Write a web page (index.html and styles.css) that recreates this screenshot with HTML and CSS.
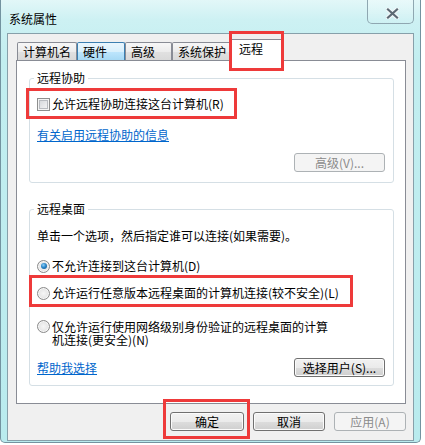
FILE: index.html
```html
<!DOCTYPE html>
<html lang="zh-CN">
<head>
<meta charset="utf-8">
<title>系统属性</title>
<link rel="stylesheet" href="styles.css">
</head>
<body>
<div class="window">
  <div class="titlebar">
    <span class="title">系统属性</span>
    <div class="close-btn">
      <svg width="13" height="11" viewBox="0 0 13 11">
        <path d="M2 1.5 L11 9.5 M11 1.5 L2 9.5" stroke="#f4f8fa" stroke-width="4.2" stroke-linecap="round" fill="none"/>
        <path d="M2 1.5 L11 9.5 M11 1.5 L2 9.5" stroke="#5d6a74" stroke-width="2.2" stroke-linecap="square" fill="none"/>
      </svg>
    </div>
  </div>
  <div class="client">
    <div class="tabs">
      <div class="tab t1">计算机名</div>
      <div class="tab t2 hover">硬件</div>
      <div class="tab t3">高级</div>
      <div class="tab t4">系统保护</div>
      <div class="tab t5 active">远程</div>
    </div>
    <div class="panel">
      <fieldset class="group g1">
        <legend>远程协助</legend>
        <div class="check-row"><span class="checkbox"></span><span class="lbl">允许远程协助连接这台计算机(R)</span></div>
        <div class="link-row l1"><a class="link">有关启用远程协助的信息</a></div>
        <div class="btn-row b1"><span class="btn disabled wide">高级(V)...</span></div>
      </fieldset>
      <fieldset class="group g2">
        <legend>远程桌面</legend>
        <p class="desc">单击一个选项，然后指定谁可以连接(如果需要)。</p>
        <div class="radio-row r1"><span class="radio checked"></span><span class="lbl">不允许连接到这台计算机(D)</span></div>
        <div class="radio-row r2"><span class="radio"></span><span class="lbl">允许运行任意版本远程桌面的计算机连接(较不安全)(L)</span></div>
        <div class="radio-row r3"><span class="radio"></span><span class="lbl multi">仅允许运行使用网络级别身份验证的远程桌面的计算机连接(更安全)(N)</span></div>
        <div class="help-row"><a class="link">帮助我选择</a><span class="btn wide">选择用户(S)...</span></div>
      </fieldset>
    </div>
    <div class="footer">
      <span class="btn ok">确定</span>
      <span class="btn">取消</span>
      <span class="btn disabled">应用(A)</span>
    </div>
  </div>
  <div class="mark m-tab"></div>
  <div class="mark m-check"></div>
  <div class="mark m-radio"></div>
  <div class="mark m-ok"></div>
</div>
</body>
</html>
```

FILE: styles.css
```css
html, body {
  margin: 0;
  padding: 0;
  background: #ffffff;
}
body {
  font-family: "Noto Sans CJK SC", "Noto Sans", sans-serif;
  font-size: 12px;
  color: #000;
}
.window {
  position: relative;
  width: 421px;
  height: 443px;
  box-sizing: border-box;
  padding: 0 6px 1px 6px;
  border: 1px solid #7393a0;
  border-top: none;
  border-radius: 0 0 5px 5px;
  background: linear-gradient(180deg, #e2f7f8 0px, #cdf1f3 20px, #c2eef0 60px, #b9ebee 100%);
  display: flex;
  flex-direction: column;
}
.titlebar {
  height: 33px;
  display: flex;
  align-items: flex-start;
  padding-left: 2px;
}
.title {
  padding-top: 12px;
  line-height: 14px;
  color: #000;
}
.close-btn {
  margin-left: auto;
  width: 47px;
  height: 24px;
  box-sizing: border-box;
  border: 1px solid #8fa7b1;
  border-top: none;
  border-radius: 0 0 5px 5px;
  background: linear-gradient(180deg, rgba(255,255,255,0.25), rgba(255,255,255,0.05));
  display: flex;
  justify-content: center;
  align-items: center;
  padding: 3px 0 0 3px;
}
.client {
  height: 408px;
  box-sizing: border-box;
  border: 1px solid #87a0aa;
  background: #f0f0f0;
  display: flex;
  flex-direction: column;
}
.tabs {
  height: 26px;
  display: flex;
  align-items: flex-end;
  padding-left: 9px;
  position: relative;
  z-index: 1;
}
.tab {
  box-sizing: border-box;
  height: 18px;
  padding: 2px 0 0 5px;
  line-height: 14px;
  border: 1px solid #898c95;
  border-bottom: none;
  border-radius: 2px 2px 0 0;
  background: linear-gradient(180deg, #f7f7f7 0%, #ececec 50%, #e1e1e1 51%, #d9d9d9 100%);
  white-space: nowrap;
}
.t1 { width: 60px; }
.t2 { width: 48px; }
.t3 { width: 47px; }
.t4 { width: 59px; }
.tab.hover {
  border-color: #3c7fb1;
  background: linear-gradient(180deg, #eaf6fd 0%, #d9f0fc 50%, #bee6fd 51%, #a7d9f5 100%);
}
.tab.active {
  width: 53px;
  height: 22px;
  margin-left: -1px;
  margin-bottom: -1px;
  padding: 2px 0 0 8px;
  background: #ffffff;
  border-color: #898c95;
}
.panel {
  height: 344px;
  box-sizing: border-box;
  margin: 0 7px 0 8px;
  border: 1px solid #898c95;
  background: #ffffff;
  padding: 10px 11px 0 12px;
}
.group {
  margin: 0;
  border: 1px solid #d5dfe5;
  border-radius: 3px;
  padding: 0 8px 0 7px;
  min-width: 0;
}
.group legend {
  margin-left: -3px;
  padding: 0 3px;
  line-height: 14px;
}
.g1 { padding-bottom: 10px; }
.g2 { margin-top: 19px; padding-bottom: 8px; }
.check-row, .radio-row {
  display: flex;
  align-items: center;
  line-height: 14px;
}
.check-row { margin-top: 12px; }
.checkbox {
  width: 13px;
  height: 13px;
  box-sizing: border-box;
  border: 1px solid #8e8f8f;
  background: linear-gradient(135deg, #cfd2d6 0%, #e9eaec 60%, #f7f7f7 100%);
  box-shadow: inset 0 0 0 1px #f4f4f4, inset 0 0 0 2px #b8bbc0;
  margin-right: 2px;
  flex: none;
}
.lbl { white-space: nowrap; }
.link-row { line-height: 14px; }
.l1 { margin-top: 17px; }
.link {
  color: #0066cc;
  text-decoration: underline;
  cursor: pointer;
}
.btn-row {
  display: flex;
  justify-content: flex-end;
}
.b1 { margin-top: 11px; }
.btn {
  box-sizing: border-box;
  width: 72px;
  height: 19px;
  line-height: 17px;
  text-align: center;
  border: 1px solid #707070;
  border-radius: 3px;
  background: linear-gradient(180deg, #f2f2f2 0%, #ebebeb 50%, #dddddd 51%, #cfcfcf 100%);
  box-shadow: inset 0 0 0 1px #fbfbfb;
  color: #000;
  white-space: nowrap;
  flex: none;
}
.btn.wide { width: 91px; }
.btn.ok { width: 74px; }
.btn.disabled {
  border-color: #adb2b5;
  background: #f4f4f4;
  box-shadow: none;
  color: #8b8b8b;
}
.desc {
  margin: 13px 0 0 0;
  line-height: 14px;
}
.radio {
  width: 13px;
  height: 13px;
  box-sizing: border-box;
  border-radius: 50%;
  border: 1px solid #8a8a8a;
  background: radial-gradient(circle at 50% 50%, #f6f6f6 0%, #eaeaea 45%, #d3d3d3 100%);
  box-shadow: inset 0 0 0 1px #f7f7f7;
  margin-right: 2px;
  flex: none;
  display: flex;
  align-items: center;
  justify-content: center;
}
.radio.checked::after {
  content: "";
  width: 6px;
  height: 6px;
  border-radius: 50%;
  background: radial-gradient(circle at 40% 35%, #8fd0f8 0%, #2b86c9 45%, #0f4f86 100%);
}
.r1 { margin-top: 16px; }
.r2 { margin-top: 13px; }
.r3 {
  margin-top: 20px;
  align-items: flex-start;
  line-height: 13px;
}
.lbl.multi {
  white-space: normal;
  width: 280px;
}
.help-row {
  margin-top: 12px;
  display: flex;
  justify-content: space-between;
  align-items: center;
  line-height: 14px;
}
.footer {
  display: flex;
  justify-content: flex-end;
  gap: 9px;
  margin-top: 8px;
  padding-right: 7px;
}
.mark {
  position: absolute;
  box-sizing: border-box;
  border: 3px solid #ee3a3a;
  pointer-events: none;
  z-index: 5;
}
.m-tab { left: 228px; top: 31px; width: 55px; height: 40px; }
.m-check { left: 25px; top: 88px; width: 211px; height: 31px; }
.m-radio { left: 28px; top: 275px; width: 324px; height: 32px; }
.m-ok { left: 162px; top: 399px; width: 87px; height: 40px; }
```
